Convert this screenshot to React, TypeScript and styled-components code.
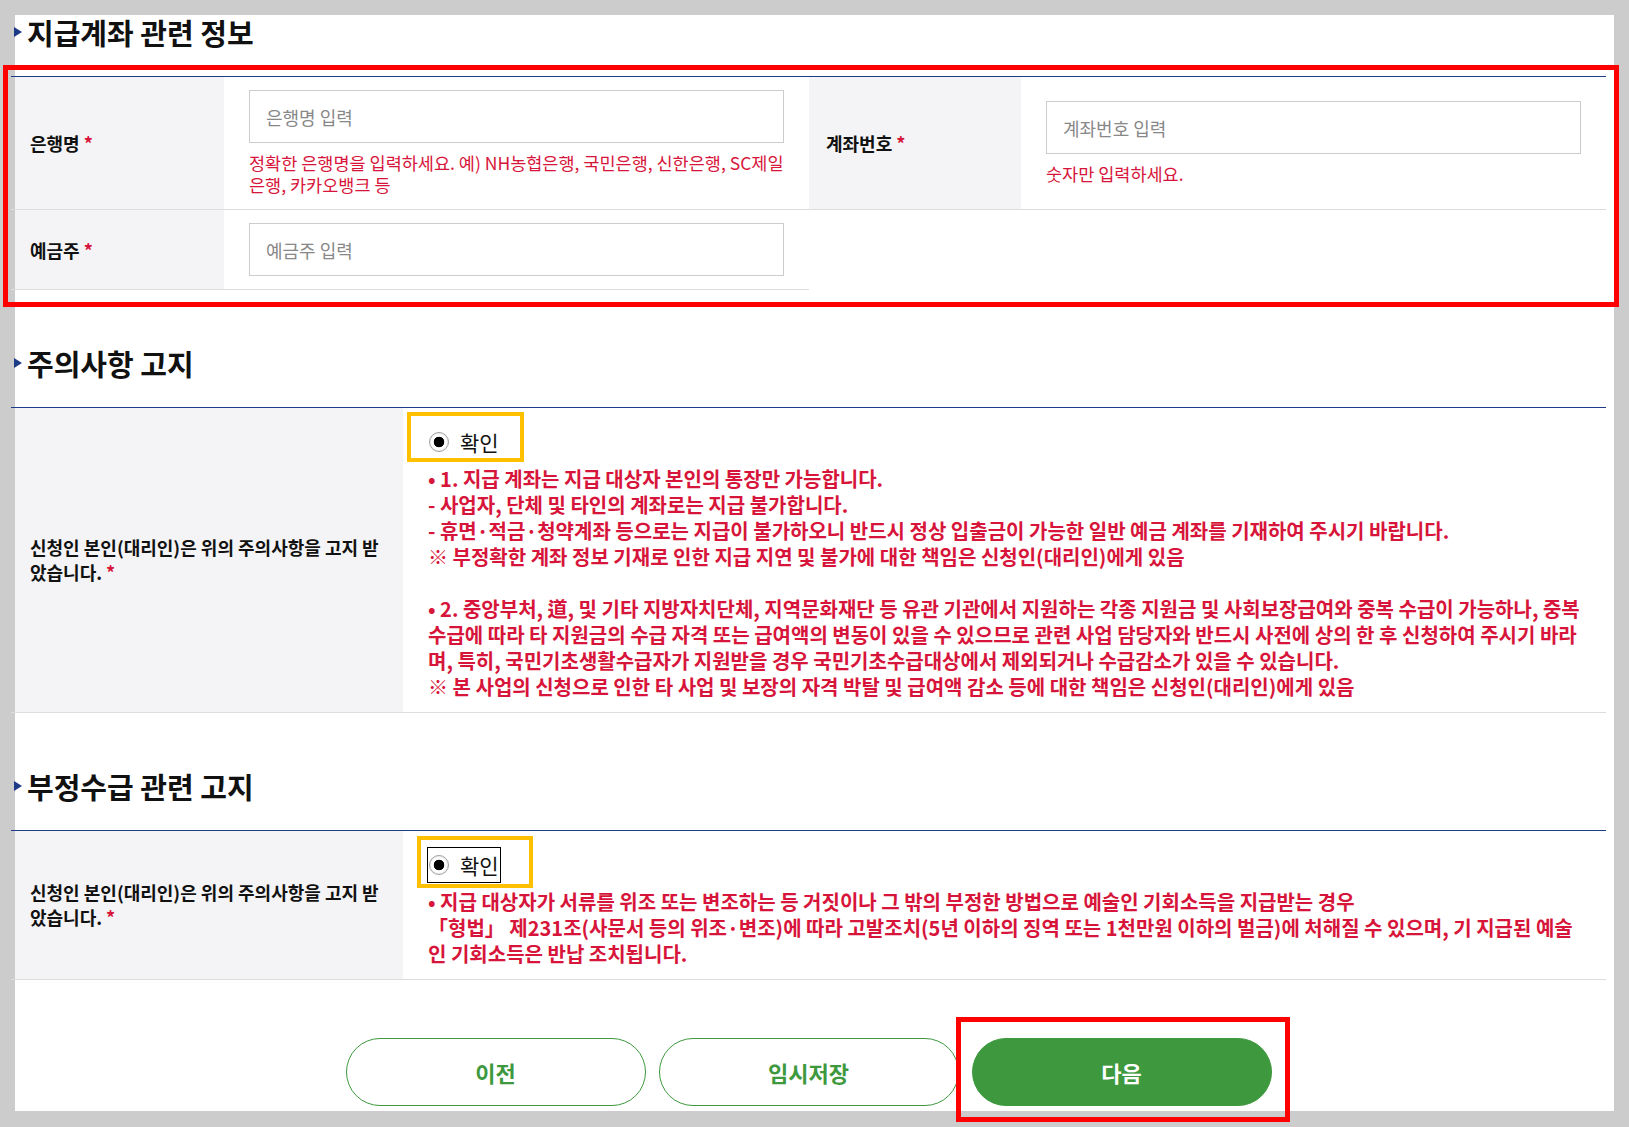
import styled, { createGlobalStyle } from 'styled-components'

const NAVY = '#1d3b86'
const RED = '#d7153a'
const GREEN = '#3e993e'

const GlobalStyle = createGlobalStyle`
  html, body {
    margin: 0;
    padding: 0;
    background: #cccccc;
  }
  body {
    font-family: 'Noto Sans CJK KR', 'Noto Sans', sans-serif;
    color: #111;
  }
  * {
    box-sizing: border-box;
  }
`

const notice1 = [
  '• 1. 지급 계좌는 지급 대상자 본인의 통장만 가능합니다.',
  '- 사업자, 단체 및 타인의 계좌로는 지급 불가합니다.',
  '- 휴면·적금·청약계좌 등으로는 지급이 불가하오니 반드시 정상 입출금이 가능한 일반 예금 계좌를 기재하여 주시기 바랍니다.',
  '※ 부정확한 계좌 정보 기재로 인한 지급 지연 및 불가에 대한 책임은 신청인(대리인)에게 있음',
  '',
  '• 2. 중앙부처, 道, 및 기타 지방자치단체, 지역문화재단 등 유관 기관에서 지원하는 각종 지원금 및 사회보장급여와 중복 수급이 가능하나, 중복',
  '수급에 따라 타 지원금의 수급 자격 또는 급여액의 변동이 있을 수 있으므로 관련 사업 담당자와 반드시 사전에 상의 한 후 신청하여 주시기 바라',
  '며, 특히, 국민기초생활수급자가 지원받을 경우 국민기초수급대상에서 제외되거나 수급감소가 있을 수 있습니다.',
  '※ 본 사업의 신청으로 인한 타 사업 및 보장의 자격 박탈 및 급여액 감소 등에 대한 책임은 신청인(대리인)에게 있음',
]

const notice2 = [
  '• 지급 대상자가 서류를 위조 또는 변조하는 등 거짓이나 그 밖의 부정한 방법으로 예술인 기회소득을 지급받는 경우',
  '「형법」 제231조(사문서 등의 위조·변조)에 따라 고발조치(5년 이하의 징역 또는 1천만원 이하의 벌금)에 처해질 수 있으며, 기 지급된 예술',
  '인 기회소득은 반납 조치됩니다.',
]

export default function App() {
  return (
    <>
      <GlobalStyle />
      <Page>
        <Panel>
          <Content>
            <Section>
              <SectionTitle>지급계좌 관련 정보</SectionTitle>
              <AccountGrid>
                <LabelCell $edge>
                  은행명<Required>*</Required>
                </LabelCell>
                <FieldCell>
                  <TextInput placeholder='은행명 입력' />
                  <HelpText>
                    정확한 은행명을 입력하세요. 예) NH농협은행, 국민은행, 신한은행, SC제일
                    <br />
                    은행, 카카오뱅크 등
                  </HelpText>
                </FieldCell>
                <LabelCell>
                  계좌번호<Required>*</Required>
                </LabelCell>
                <FieldCell>
                  <TextInput placeholder='계좌번호 입력' />
                  <HelpText>숫자만 입력하세요.</HelpText>
                </FieldCell>
                <LabelCell $edge>
                  예금주<Required>*</Required>
                </LabelCell>
                <FieldCell>
                  <TextInput placeholder='예금주 입력' />
                </FieldCell>
                <Annotation $top={-12} $left={-8} $right={-13} $bottom={-17} />
              </AccountGrid>
            </Section>

            <Section>
              <SectionTitle>주의사항 고지</SectionTitle>
              <NoticeGrid>
                <NoticeLabel>
                  <span>
                    신청인 본인(대리인)은 위의 주의사항을 고지 받
                    <br />
                    았습니다.<Required>*</Required>
                  </span>
                </NoticeLabel>
                <NoticeBody>
                  <RadioRow>
                    <Radio name='notice1' defaultChecked />
                    확인
                    <Highlight $top={-13} $left={-21} $right={-24} $bottom={-3} />
                  </RadioRow>
                  <NoticeText>
                    {notice1.map((line, i) => (
                      <NoticeLine key={i}>{line || '\u00a0'}</NoticeLine>
                    ))}
                  </NoticeText>
                </NoticeBody>
              </NoticeGrid>
            </Section>

            <Section>
              <SectionTitle>부정수급 관련 고지</SectionTitle>
              <NoticeGrid>
                <NoticeLabel>
                  <span>
                    신청인 본인(대리인)은 위의 주의사항을 고지 받
                    <br />
                    았습니다.<Required>*</Required>
                  </span>
                </NoticeLabel>
                <NoticeBody>
                  <RadioRow $focused>
                    <Radio name='notice2' defaultChecked />
                    확인
                    <Highlight $top={-12} $left={-11} $right={-33} $bottom={-6} />
                  </RadioRow>
                  <NoticeText>
                    {notice2.map((line, i) => (
                      <NoticeLine key={i}>{line}</NoticeLine>
                    ))}
                  </NoticeText>
                </NoticeBody>
              </NoticeGrid>
            </Section>

            <ButtonRow>
              <StepButton>이전</StepButton>
              <StepButton>임시저장</StepButton>
              <MarkedButton>
                <StepButton $primary>다음</StepButton>
                <Annotation $top={-21} $left={-16} $right={-18} $bottom={-16} />
              </MarkedButton>
            </ButtonRow>
          </Content>
        </Panel>
      </Page>
    </>
  )
}

const Page = styled.div`
  padding: 15px;
`

const Panel = styled.div`
  background: #fff;
  padding: 0 8px 5px 0;
`

const Content = styled.div`
  margin-left: -4px;
`

const Section = styled.section`
  & + & {
    margin-top: 56px;
  }
`

const SectionTitle = styled.h2`
  display: flex;
  align-items: center;
  gap: 5px;
  margin: 0 0 27px;
  padding-left: 3px;
  font-size: 29px;
  line-height: 34px;
  font-weight: 700;
  color: #111;

  &::before {
    content: '';
    width: 0;
    height: 0;
    border-left: 8px solid ${NAVY};
    border-top: 5.5px solid transparent;
    border-bottom: 5.5px solid transparent;
  }
`

const AccountGrid = styled.div`
  position: relative;
  display: grid;
  grid-template-columns: 213px 1fr 212px 1fr;
  border-top: 1px solid ${NAVY};
`

const LabelCell = styled.div<{ $edge?: boolean }>`
  display: flex;
  align-items: center;
  padding-left: ${({ $edge }) => ($edge ? '19px' : '17px')};
  background: ${({ $edge }) =>
    $edge ? 'linear-gradient(to right, #cccccc 4px, #f4f4f6 4px)' : '#f4f4f6'};
  border-bottom: 1px solid #dddddd;
  font-size: 18px;
  font-weight: 700;
  color: #111;
`

const Required = styled.span`
  margin-left: 4px;
  color: ${RED};
`

const FieldCell = styled.div`
  display: flex;
  flex-direction: column;
  justify-content: center;
  padding: 13px 25px;
  border-bottom: 1px solid #dddddd;
`

const TextInput = styled.input`
  width: 100%;
  height: 53px;
  padding: 0 16px;
  border: 1px solid #cccccc;
  background: #fff;
  font-family: inherit;
  font-size: 18px;
  color: #111;
  outline: none;

  &::placeholder {
    color: #888;
  }
`

const HelpText = styled.p`
  margin: 9px 0 0;
  font-size: 17.5px;
  line-height: 22px;
  white-space: nowrap;
  color: ${RED};
`

const Annotation = styled.div<{ $top: number; $left: number; $right: number; $bottom: number }>`
  position: absolute;
  top: ${({ $top }) => $top}px;
  left: ${({ $left }) => $left}px;
  right: ${({ $right }) => $right}px;
  bottom: ${({ $bottom }) => $bottom}px;
  border: 5px solid #ff0000;
  pointer-events: none;
`

const NoticeGrid = styled.div`
  display: grid;
  grid-template-columns: 392px 1fr;
  border-top: 1px solid ${NAVY};
  border-bottom: 1px solid #dddddd;
`

const NoticeLabel = styled.div`
  display: flex;
  align-items: center;
  padding: 0 12px 0 19px;
  background: linear-gradient(to right, #cccccc 4px, #f4f4f6 4px);
  font-size: 18px;
  line-height: 25px;
  font-weight: 700;
  white-space: nowrap;
  color: #111;
`

const NoticeBody = styled.div`
  padding: 17px 24px 12px 25px;
`

const RadioRow = styled.label<{ $focused?: boolean }>`
  position: relative;
  display: flex;
  align-items: center;
  width: fit-content;
  height: 34px;
  padding-right: 1px;
  font-size: 21px;
  color: #111;
  outline: ${({ $focused }) => ($focused ? '1px solid #000' : 'none')};
`

const Radio = styled.input.attrs({ type: 'radio' })`
  appearance: none;
  margin: 0 11px 0 1px;
  width: 20px;
  height: 20px;
  border-radius: 50%;
  border: 1px solid #a0a0a0;
  background: radial-gradient(circle, #000 0 5px, #fff 5.6px);
  box-shadow: inset 0 0 2px #d0d0d0;
`

const Highlight = styled.span<{ $top: number; $left: number; $right: number; $bottom: number }>`
  position: absolute;
  top: ${({ $top }) => $top}px;
  left: ${({ $left }) => $left}px;
  right: ${({ $right }) => $right}px;
  bottom: ${({ $bottom }) => $bottom}px;
  border: 4px solid #ffc000;
  pointer-events: none;
`

const NoticeText = styled.div`
  margin-top: 7px;
  font-size: 20px;
  line-height: 26px;
  font-weight: 700;
  color: ${RED};
`

const NoticeLine = styled.div`
  white-space: nowrap;
`

const ButtonRow = styled.div`
  display: flex;
  justify-content: center;
  gap: 13px;
  margin-top: 58px;
`

const MarkedButton = styled.div`
  position: relative;
`

const StepButton = styled.button<{ $primary?: boolean }>`
  width: 300px;
  height: 68px;
  border-radius: 34px;
  border: 1px solid ${GREEN};
  background: ${({ $primary }) => ($primary ? GREEN : '#fff')};
  color: ${({ $primary }) => ($primary ? '#fff' : GREEN)};
  font-family: inherit;
  font-size: 22px;
  font-weight: 700;
  cursor: pointer;
`
